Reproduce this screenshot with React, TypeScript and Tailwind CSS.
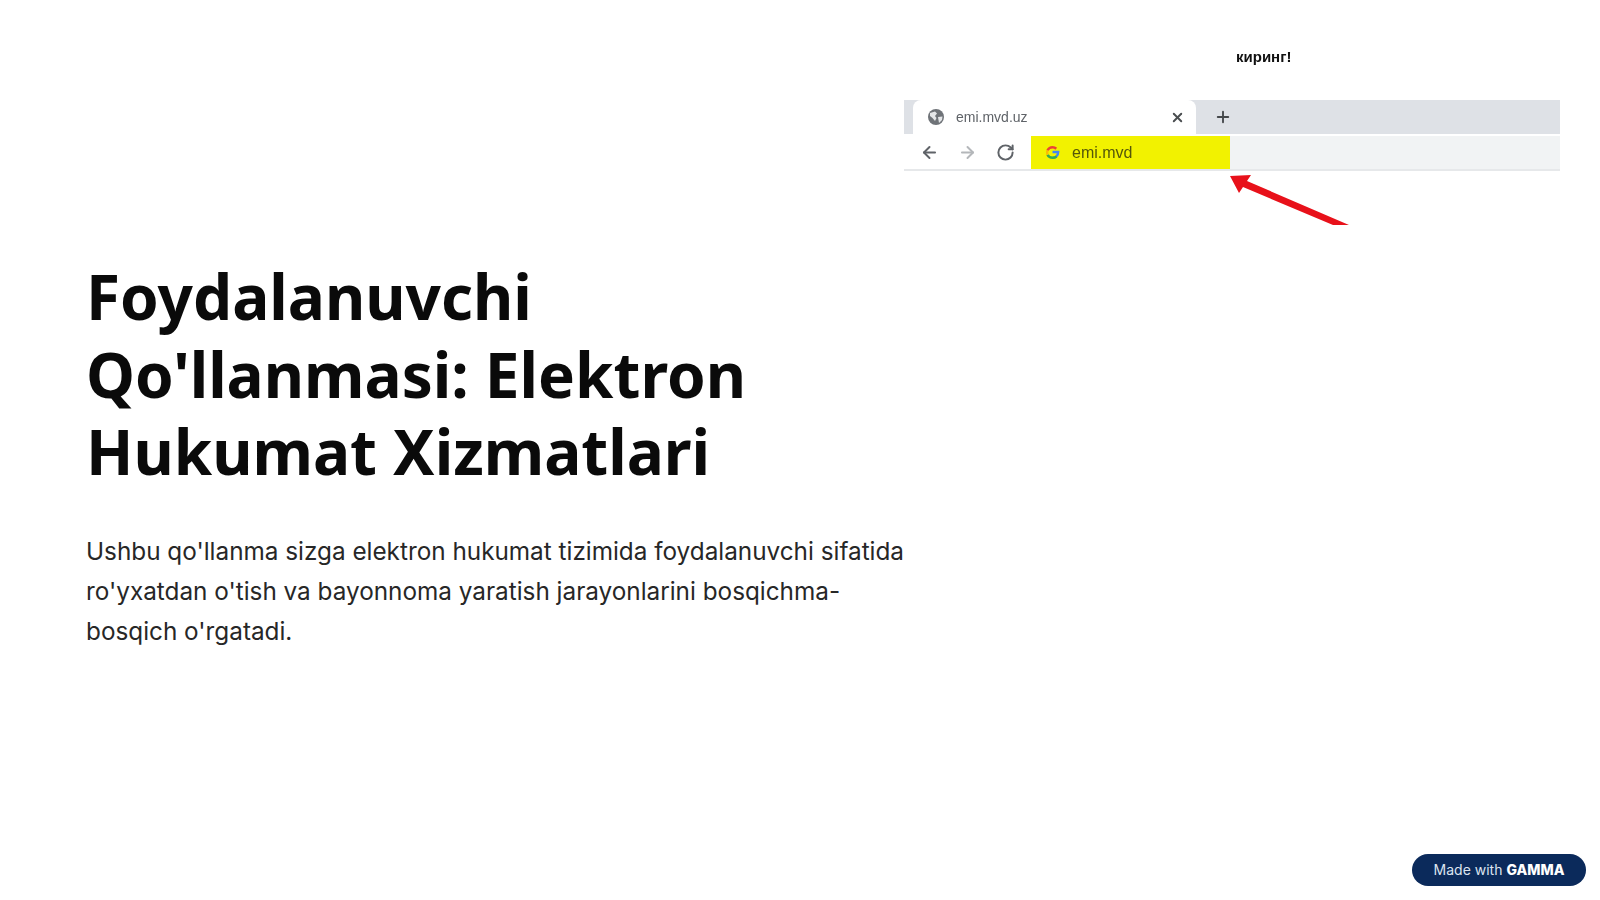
import { ArrowLeft, ArrowRight, Plus, RotateCw, X } from 'lucide-react'

function GlobeIcon() {
  return (
    <svg width="18" height="18" viewBox="0 0 18 18">
      <circle cx="9" cy="9" r="8" fill="#6f7378" />
      <path d="M3 5 L8 3.5 L10 5.5 L8 8 L9.5 10 L8 13 L5.5 10 L3 8 Z" fill="#e4e6e8" />
      <path d="M11 9 L15.5 8.5 L15 12 L12 15 L11.5 12 Z" fill="#e4e6e8" />
    </svg>
  )
}

function GoogleIcon() {
  return (
    <svg width="15" height="15" viewBox="0 0 48 48" fill="none" strokeWidth="8">
      <path d="M24 22 H42 C42 33 34 41 24 41" stroke="#4285f4" />
      <path d="M37 37 C33 40 29 41 24 41 C17 41 11 37 8 31" stroke="#34a853" />
      <path d="M8 31 C6 26 6 22 8 17" stroke="#fbbc05" />
      <path d="M8 17 C11 11 17 7 24 7 C29 7 33 9 36 12" stroke="#ea4335" />
    </svg>
  )
}

function BrowserSnippet() {
  return (
    <div className="w-full blur-[0.7px] font-['Liberation_Sans',sans-serif]">
      <p className="h-[100px] pt-[47px] pl-[332px] text-[15px] leading-[20px] font-bold text-[#111]">киринг!</p>
      <div className="flex h-[34px] bg-[#dee1e6]">
        <div className="ml-[9px] flex w-[283px] items-center rounded-t-[8px] bg-white pl-[14px] pr-[11px]">
          <GlobeIcon />
          <span className="ml-[11px] flex-1 text-[14px] text-[#5f6368]">emi.mvd.uz</span>
          <X size={15} strokeWidth={3} color="#4a4d50" />
        </div>
        <div className="ml-[18px] flex items-center">
          <Plus size={18} strokeWidth={2.5} color="#45484b" />
        </div>
      </div>
      <div className="flex h-[37px] border-b-2 border-[#e6e8ea] pt-[2px]">
        <div className="flex w-[127px] items-center gap-[19px] pl-[16px]">
          <ArrowLeft size={19} strokeWidth={2.5} color="#5f6368" />
          <ArrowRight size={19} strokeWidth={2.5} color="#b4b7ba" />
          <RotateCw size={19} strokeWidth={2.5} color="#5f6368" />
        </div>
        <div className="flex w-[199px] items-center bg-[#f2f200] pl-[14px]">
          <GoogleIcon />
          <span className="ml-[12px] text-[16px] text-[#55570a]">emi.mvd</span>
        </div>
        <div className="flex-1 bg-[#f1f3f4]" />
      </div>
      <svg width="130" height="54" viewBox="0 0 130 54" className="ml-[325px]">
        <path d="M1 5 L22 4 L18 10 L120 54 L104 54 L14 16 L10 22 Z" fill="#e8111a" />
      </svg>
    </div>
  )
}

export default function App() {
  return (
    <div className="relative flex h-[900px] w-[1600px] overflow-hidden bg-white">
      <div className="flex w-[904px] shrink-0 flex-col pl-[86px] pt-[258px]">
        <h1 className="font-['Noto_Sans',sans-serif] text-[62px] leading-[77.5px] font-bold text-[#0a0a0a]">
          Foydalanuvchi
          <br />
          Qo'llanmasi: Elektron
          <br />
          Hukumat Xizmatlari
        </h1>
        <p className="mt-[40px] w-[830px] font-['Inter',sans-serif] text-[24.3px] leading-[40px] text-[#272727]">
          Ushbu qo'llanma sizga elektron hukumat tizimida foydalanuvchi sifatida ro'yxatdan o'tish va bayonnoma yaratish jarayonlarini bosqichma-bosqich o'rgatadi.
        </p>
      </div>
      <div className="w-[656px] shrink-0">
        <BrowserSnippet />
      </div>
      <a className="absolute left-[1412px] top-[854px] flex h-[32px] w-[174px] items-center justify-center gap-[4px] rounded-full bg-[#0b2a5b] pb-[1px] font-['Inter',sans-serif] text-[14px] text-[#dce4f0]">
        Made with <span className="font-extrabold text-white">GAMMA</span>
      </a>
    </div>
  )
}
